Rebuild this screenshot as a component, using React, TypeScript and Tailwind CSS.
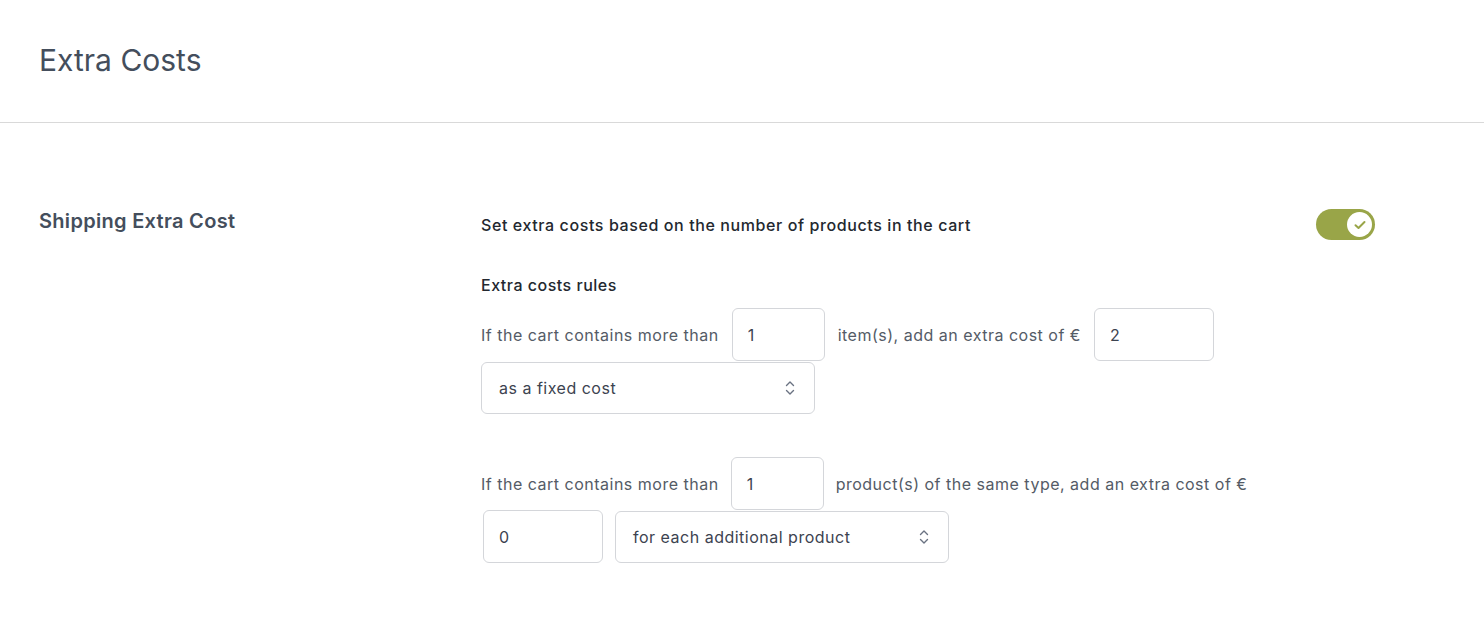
import React, { useState } from 'react';

function Chevrons() {
  return (
    <svg width="12" height="18" viewBox="0 0 12 18" fill="none" className="text-gray-500">
      <path d="M2.5 6.5 6 3l3.5 3.5" stroke="currentColor" strokeWidth="1.4" strokeLinecap="round" strokeLinejoin="round" />
      <path d="M2.5 11.5 6 15l3.5-3.5" stroke="currentColor" strokeWidth="1.4" strokeLinecap="round" strokeLinejoin="round" />
    </svg>
  );
}

function NumberBox({ value, width }: { value: string; width: string }) {
  return (
    <input
      type="text"
      defaultValue={value}
      className={`${width} h-[53px] rounded-md border border-[#d4d6da] bg-white px-[15px] text-base tracking-[0.5px] text-[#3c4350] outline-none`}
    />
  );
}

function SelectBox({ label, width }: { label: string; width: string }) {
  return (
    <div className={`${width} h-[52px] flex items-center justify-between rounded-md border border-[#d4d6da] bg-white pl-[17px] pr-[18px] text-base text-[#3c4350]`}>
      <span>{label}</span>
      <Chevrons />
    </div>
  );
}

export default function App() {
  const [enabled, setEnabled] = useState(true);

  return (
    <div className="min-h-screen bg-white" style={{ fontFamily: 'Inter, "Noto Sans", sans-serif' }}>
      <div className="h-[123px] border-b border-[#d9d9d9] px-[39px] pt-[40px]">
        <h1 className="text-[30px] leading-[40px] text-[#444e5c]">Extra Costs</h1>
      </div>

      <div className="flex pt-[84px] pl-[39px]">
        <div className="w-[442px] shrink-0">
          <h2 className="text-[20px] leading-[28px] font-semibold tracking-[0.3px] text-[#444e5c]">Shipping Extra Cost</h2>
        </div>

        <div className="w-[894px] pt-[2px] tracking-[0.5px]">
          <div className="flex items-center justify-between">
            <span className="text-base font-medium tracking-[0.6px] text-[#23282f]">Set extra costs based on the number of products in the cart</span>
            <button
              onClick={() => setEnabled(!enabled)}
              className="relative h-[31px] w-[59px] rounded-full bg-[#99a548]"
            >
              <span className="absolute right-[3px] top-[3px] flex h-[25px] w-[25px] items-center justify-center rounded-full bg-white">
                <svg width="12" height="10" viewBox="0 0 12 10" fill="none">
                  <path d="M1.5 5.2 4.5 8l6-6" stroke="#99a548" strokeWidth="2" strokeLinecap="round" strokeLinejoin="round" />
                </svg>
              </span>
            </button>
          </div>

          <div className="mt-[33px] text-base font-medium leading-6 text-[#23282f]">Extra costs rules</div>

          <div className="mt-[11px] flex flex-wrap items-center gap-x-[13px] gap-y-[1px] text-base text-[#545b66]">
            <span>If the cart contains more than</span>
            <NumberBox value="1" width="w-[93px]" />
            <span>item(s), add an extra cost of €</span>
            <NumberBox value="2" width="w-[120px]" />
            <SelectBox label="as a fixed cost" width="w-[334px]" />
          </div>

          <div className="mt-[43px] flex flex-wrap items-center gap-x-[12px] gap-y-0 text-base text-[#545b66]">
            <span>If the cart contains more than</span>
            <NumberBox value="1" width="w-[93px]" />
            <span>product(s) of the same type, add an extra cost of €</span>
            <div className="pl-[2px]">
              <NumberBox value="0" width="w-[120px]" />
            </div>
            <SelectBox label="for each additional product" width="w-[334px]" />
          </div>
        </div>
      </div>
    </div>
  );
}
